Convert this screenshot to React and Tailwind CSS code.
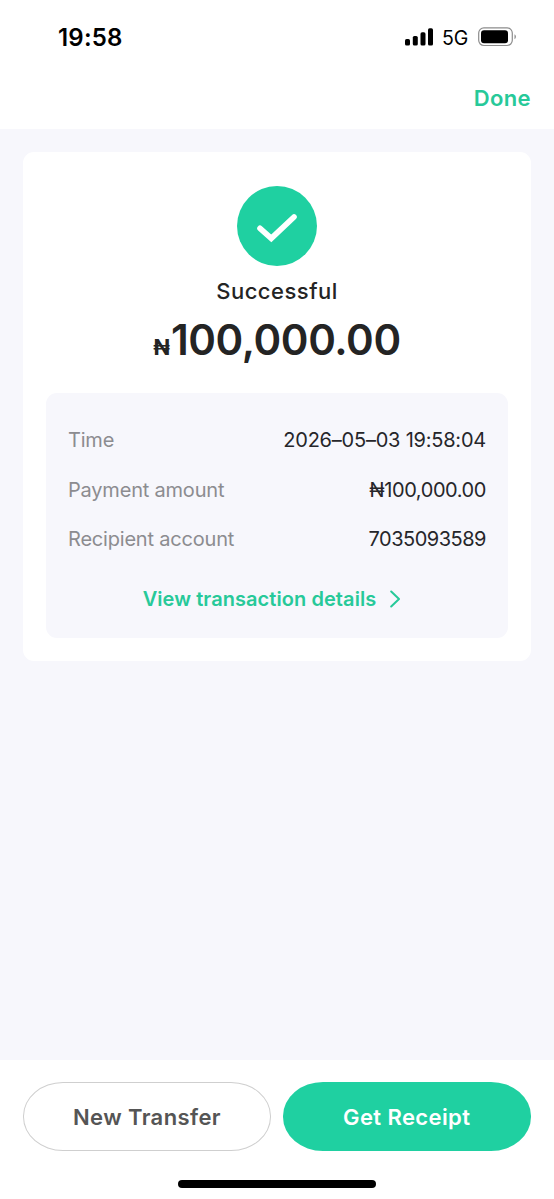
const details = [
  { label: 'Time', value: '2026–05–03 19:58:04', tracking: 'tracking-[-0.22px]' },
  { label: 'Payment amount', value: '₦100,000.00', tracking: 'tracking-[-0.42px]' },
  { label: 'Recipient account', value: '7035093589', tracking: 'tracking-[-0.5px]' },
]

function StatusBar() {
  return (
    <div className="flex h-[74px] items-center justify-between pl-[58px] pr-[36px]">
      <span className="mt-[2px] text-[24px] font-semibold leading-none tracking-[0.2px] text-black">19:58</span>
      <div className="flex h-[20px] items-center">
        <svg width="29" height="18" viewBox="0 0 29 18" fill="#000">
          <rect x="0" y="11" width="5" height="6.5" rx="1.6" />
          <rect x="7.8" y="8" width="5" height="9.5" rx="1.6" />
          <rect x="15.5" y="4.3" width="5" height="13.2" rx="1.6" />
          <rect x="23" y="0.3" width="5" height="17.2" rx="1.6" />
        </svg>
        <span className="ml-2 mt-[3px] w-[28px] text-[19.5px] leading-none text-black">5G</span>
        <svg className="ml-2" width="40" height="20" viewBox="0 0 40 20">
          <rect x="0.7" y="0.9" width="33.6" height="17.6" rx="5.2" fill="none" stroke="#8c8c8c" strokeWidth="1.2" />
          <rect x="3" y="3.2" width="27" height="13" rx="3" fill="#000" />
          <path d="M36.5 7.2a2.9 2.9 0 0 1 0 5z" fill="#8c8c8c" />
        </svg>
      </div>
    </div>
  )
}

function DetailRow({ label, value, tracking }) {
  return (
    <div className="flex h-[49.7px] items-center justify-between text-[20px] font-normal leading-none">
      <span className="tracking-[-0.2px] text-[#8c8c90]">{label}</span>
      <span className={`text-[#26262a] ${tracking}`}>{value}</span>
    </div>
  )
}

export default function App() {
  return (
    <div className="flex h-[1199px] w-[554px] flex-col overflow-hidden bg-[#f7f7fc] font-['Inter',sans-serif]">
      <header className="h-[129px] bg-white">
        <StatusBar />
        <div className="flex h-[48px] items-center justify-end pr-[23px]">
          <button className="text-[22px] font-semibold leading-none tracking-[0.4px] text-[#27c999]">Done</button>
        </div>
      </header>

      <main className="flex-1 px-[23px] pt-[23px]">
        <section className="flex h-[509px] flex-col items-center rounded-[11px] bg-white px-[23px] pt-[34px]">
          <svg width="80" height="80" viewBox="0 0 80 80">
            <circle cx="40" cy="40" r="40" fill="#1fd0a1" />
            <path d="M23 42.3 34.3 52.4 57 31" fill="none" stroke="#fff" strokeWidth="5.6" strokeLinecap="round" />
          </svg>
          <h1 className="mt-[10px] text-[22px] font-medium leading-[30px] tracking-[0.5px] text-[#242424]">Successful</h1>
          <p className="flex h-[68px] items-baseline text-[42px] font-semibold leading-[68px] text-[#242424]">
            <span className="mr-[1px] text-[22px] font-bold">₦</span>
            <span className="tracking-[-0.4px]">100,000.00</span>
          </p>

          <div className="mt-[19px] h-[245px] w-full rounded-[11px] bg-[#f7f7fc] px-[22px] pt-[22px]">
            {details.map(d => <DetailRow key={d.label} {...d} />)}
            <button className="mt-[20px] flex h-[30px] w-full items-center justify-center gap-[14px] pr-[11px] text-[20px] font-semibold leading-none tracking-[0.07px] text-[#27c999]">
              View transaction details
              <svg width="10" height="18" viewBox="0 0 10 18" fill="none" stroke="currentColor" strokeWidth="2" strokeLinecap="round" strokeLinejoin="round">
                <path d="M1.2 1.5 9 9 1.2 16.5" />
              </svg>
            </button>
          </div>
        </section>
      </main>

      <footer className="flex h-[139px] flex-col items-center bg-white px-[23px] pt-[22px]">
        <div className="flex w-full justify-between text-[22px] font-semibold leading-none tracking-[0.4px]">
          <button className="h-[69px] w-[248px] rounded-[40px/34px] border border-[#cfcfcf] text-[#555]">New Transfer</button>
          <button className="h-[69px] w-[248.5px] rounded-[40px/34px] bg-[#1fd0a1] text-white">Get Receipt</button>
        </div>
        <div className="mt-[29px] h-[8px] w-[198px] rounded-full bg-black" />
      </footer>
    </div>
  )
}
